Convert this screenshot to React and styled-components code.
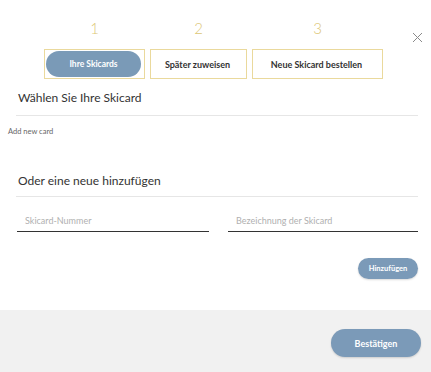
import React from "react";
import styled, { createGlobalStyle } from "styled-components";

const Global = createGlobalStyle`
  html, body { margin: 0; padding: 0; background: #fff; }
  body { font-family: Lato, "Open Sans", sans-serif; color: #333; }
  * { box-sizing: border-box; }
`;

const Modal = styled.div`
  position: relative;
  width: 431px;
  height: 372px;
  display: flex;
  flex-direction: column;
  background: #fff;
  overflow: hidden;
`;

const Body = styled.div`
  flex: 1;
  padding: 18px 13px 0 16px;
  display: flex;
  flex-direction: column;
`;

const Close = styled.button`
  position: absolute;
  top: 32px;
  right: 8px;
  width: 11px;
  height: 11px;
  padding: 0;
  border: 0;
  background: none;
  display: flex;
`;

const Steps = styled.div`
  display: flex;
  gap: 5px;
  margin-left: 28px;
`;

const Step = styled.div`
  display: flex;
  flex-direction: column;
  align-items: center;
  width: ${(p) => p.$w}px;
`;

const StepNum = styled.div`
  height: 20px;
  line-height: 20px;
  font-size: 15px;
  font-weight: 300;
  color: #dcc675;
  margin-bottom: 11px;
`;

const Tab = styled.div`
  width: 100%;
  height: 30px;
  border: 1px solid #ead99c;
  padding: 1px 3px 1px 1px;
  display: flex;
  align-items: center;
  justify-content: center;
  font-size: 9px;
  font-weight: 700;
  color: #333;
`;

const Pill = styled.div`
  width: 100%;
  height: 100%;
  border-radius: 14px;
  background: #7a9ab7;
  color: #fff;
  display: flex;
  align-items: center;
  justify-content: center;
  font-weight: 700;
  font-size: 8.5px;
`;

const Title = styled.div`
  margin-top: ${(p) => p.$mt}px;
  padding-left: 2px;
  font-size: 12px;
  line-height: 18px;
  color: #333;
`;

const Divider = styled.div`
  margin-top: ${(p) => p.$mt}px;
  height: 1px;
  background: #e6e6e6;
`;

const Small = styled.div`
  margin-top: 10px;
  margin-left: -8px;
  font-size: 7.5px;
  line-height: 12px;
  color: #666;
`;

const Fields = styled.div`
  margin-top: 12px;
  display: flex;
  gap: 19px;
  padding-left: 1px;
`;

const Input = styled.input`
  width: ${(p) => p.$w}px;
  height: 23px;
  border: 0;
  border-bottom: 1.5px solid #333;
  padding: 0 0 0 8px;
  font-family: inherit;
  font-size: 9px;
  color: #333;
  outline: none;
  background: transparent;
  &::placeholder { color: #b0b0b0; }
`;

const Actions = styled.div`
  display: flex;
  justify-content: flex-end;
  margin-top: 26px;
`;

const Button = styled.button`
  width: ${(p) => p.$w}px;
  height: ${(p) => p.$h}px;
  border: 0;
  border-radius: 999px;
  background: #7b9ab8;
  color: #fff;
  font-family: inherit;
  font-weight: 700;
  font-size: ${(p) => p.$fs}px;
  box-shadow: 0 1px 2px rgba(0,0,0,0.15);
  padding: 0;
`;

const Footer = styled.div`
  height: 62px;
  background: #f1f1f1;
  display: flex;
  justify-content: flex-end;
  align-items: flex-start;
  padding: 19px 10px 0 0;
`;

export default function App() {
  return (
    <>
      <Global />
      <Modal>
        <Close aria-label="close">
          <svg width="11" height="11" viewBox="0 0 11 11">
            <path d="M1 1L10 10M10 1L1 10" stroke="#8a8a8a" strokeWidth="1" />
          </svg>
        </Close>
        <Body>
          <Steps>
            <Step $w={101}>
              <StepNum>1</StepNum>
              <Tab>
                <Pill>Ihre Skicards</Pill>
              </Tab>
            </Step>
            <Step $w={97}>
              <StepNum>2</StepNum>
              <Tab>Später zuweisen</Tab>
            </Step>
            <Step $w={131}>
              <StepNum>3</StepNum>
              <Tab>Neue Skicard bestellen</Tab>
            </Step>
          </Steps>
          <Title $mt={10}>Wählen Sie Ihre Skicard</Title>
          <Divider $mt={8} />
          <Small>Add new card</Small>
          <Title $mt={34}>Oder eine neue hinzufügen</Title>
          <Divider $mt={6} />
          <Fields>
            <Input $w={192} placeholder="Skicard-Nummer" />
            <Input $w={190} placeholder="Bezeichnung der Skicard" />
          </Fields>
          <Actions>
            <Button $w={60} $h={21} $fs={7.5}>Hinzufügen</Button>
          </Actions>
        </Body>
        <Footer>
          <Button $w={90} $h={28} $fs={9}>Bestätigen</Button>
        </Footer>
      </Modal>
    </>
  );
}
